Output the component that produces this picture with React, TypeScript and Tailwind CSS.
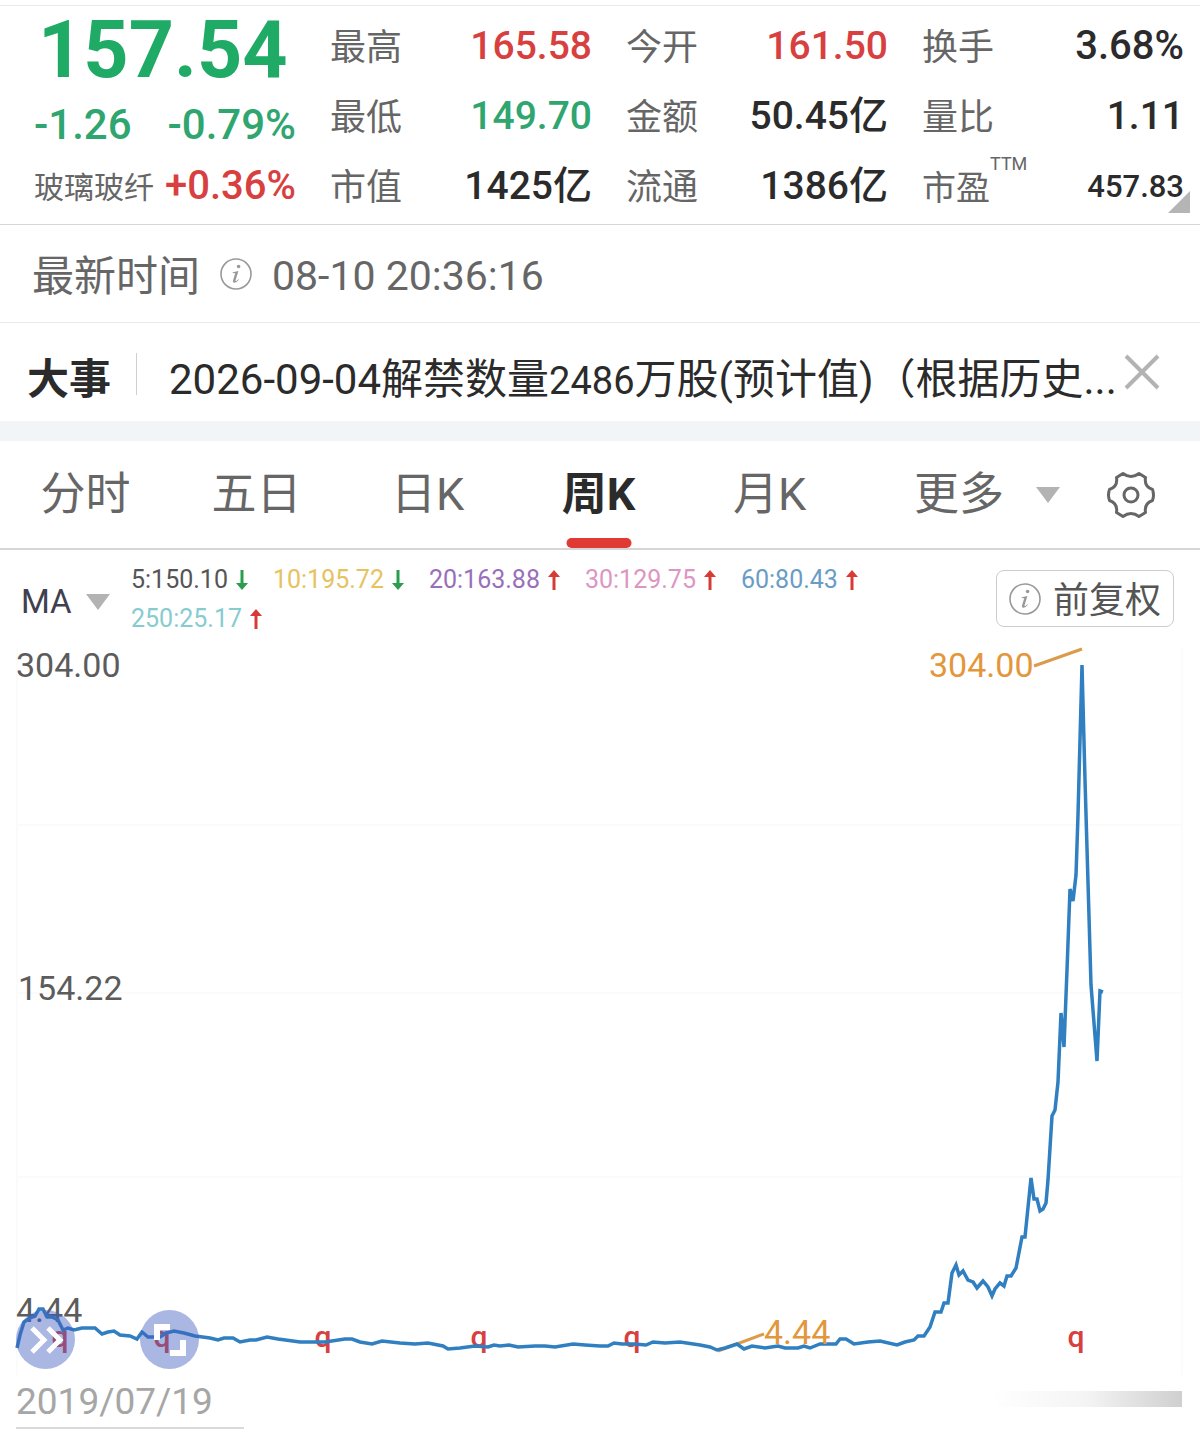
import React from 'react';

type Quote = { label: string; value: string; color: string };

const quotes: Quote[][] = [
  [
    { label: '最高', value: '165.58', color: 'text-[#d8403f]' },
    { label: '最低', value: '149.70', color: 'text-[#2fa56f]' },
    { label: '市值', value: '1425亿', color: 'text-[#2b2b2b]' },
  ],
  [
    { label: '今开', value: '161.50', color: 'text-[#d8403f]' },
    { label: '金额', value: '50.45亿', color: 'text-[#2b2b2b]' },
    { label: '流通', value: '1386亿', color: 'text-[#2b2b2b]' },
  ],
];

const averages = [
  { text: '5:150.10', color: 'text-[#555555]', up: false },
  { text: '10:195.72', color: 'text-[#e6c260]', up: false },
  { text: '20:163.88', color: 'text-[#9a6fba]', up: true },
  { text: '30:129.75', color: 'text-[#dd96c2]', up: true },
  { text: '60:80.43', color: 'text-[#6a9cc6]', up: true },
  { text: '250:25.17', color: 'text-[#86cccf]', up: true },
];

const pricePoints = `
17,1348 20,1335 24,1322 30,1318 35,1316 39,1309 43,1309 47,1317 52,1317 58,1320 63,1330 68,1328 74,1330 82,1328
95,1328 102,1334 108,1332 114,1331 120,1335 130,1336 137,1339 142,1332 148,1337 160,1337 166,1333 174,1331
184,1333 195,1336 210,1338 218,1340 224,1338 233,1338 240,1342 250,1340 256,1340 267,1337 278,1339 300,1342
325,1342 345,1339 352,1339 360,1342 372,1344 382,1341 400,1343 415,1344 428,1343 443,1346 448,1349 460,1348
475,1346 488,1347 494,1345 500,1346 509,1345 518,1347 535,1346 545,1346 555,1347 573,1344 585,1345 600,1346
608,1346 614,1343 622,1344 634,1344 646,1345 653,1342 665,1343 680,1342 700,1345 710,1347 717,1350 725,1348
737,1344 744,1349 752,1346 765,1348 778,1346 785,1348 798,1348 804,1346 810,1348 820,1344 836,1344 840,1339
846,1339 854,1344 868,1342 880,1341 897,1345 905,1342 914,1340 918,1336 924,1336 930,1327 935,1312 941,1312
944,1303 948,1303 952,1273 956,1265 959,1275 963,1271 968,1280 973,1282 977,1288 983,1281 988,1287 992,1296
995,1289 1000,1283 1004,1286 1007,1276 1011,1276 1016,1268 1022,1237 1025,1237 1031,1178 1034,1199 1037,1199
1040,1211 1043,1209 1046,1203 1048,1180 1052,1116 1055,1110 1058,1082 1061,1013 1064,1047 1067,970 1070,889
1073,901 1076,875 1078,815 1082,665 1085,780 1091,985 1097,1061 1100,991 1103,992`;

const InfoIcon: React.FC = () => (
  <svg width="32" height="32" viewBox="0 0 32 32" fill="none" className="shrink-0 text-[#999999]">
    <circle cx="16" cy="16" r="15" stroke="currentColor" strokeWidth="1.6" />
    <circle cx="18.600" cy="8.500" r="1.800" fill="currentColor" />
    <path d="M12.800 14.200L18.400 13L15.600 22.200C15.300 23.600 16.300 23.400 18.300 21.200L18.800 21.700C16.600 24.800 12.200 26.200 13 22.600L15.200 15.200L12.600 15Z" fill="currentColor" />
  </svg>
);

const Caret: React.FC = () => (
  <svg width="24" height="16" viewBox="0 0 24 16" className="shrink-0">
    <path d="M0 0h24L12 16z" fill="#b3b3b3" />
  </svg>
);

const Arrow: React.FC<{ up: boolean }> = ({ up }) => (
  <svg width="12" height="20" viewBox="0 0 12 20" className="shrink-0">
    {up ? (
      <path d="M6 0l6 7H7.500v13h-3V7H0z" fill="#d63b36" />
    ) : (
      <path d="M6 20l6-7H7.500V0h-3v13H0z" fill="#2a9d4e" />
    )}
  </svg>
);

const QuoteHeader: React.FC = () => (
  <header className="mt-[5px] grid grid-cols-4 gap-[34px] border-y border-t-[#ececec] border-b-[#d6d6d6] pt-[5px] pr-4 pb-[3px] pl-[34px]">
    <div>
      <div className="flex h-[78px] items-center pl-1 text-[79px] leading-none font-bold text-[#1fab66]">157.54</div>
      <div className="flex h-[72px] items-center justify-between text-[42px] font-medium text-[#2fa56f]">
        <span>-1.26</span>
        <span>-0.79%</span>
      </div>
      <div className="flex h-[50px] items-center justify-between whitespace-nowrap">
        <span className="pt-1 text-[30px] text-[#666666]">玻璃玻纤</span>
        <span className="text-[40px] font-medium text-[#d8403f]">+0.36%</span>
      </div>
    </div>

    {quotes.map((column, i) => (
      <dl key={i}>
        {column.map((q) => (
          <div key={q.label} className="flex h-[70px] items-center justify-between whitespace-nowrap">
            <dt className="pt-1 text-[36px] text-[#666666]">{q.label}</dt>
            <dd className={`text-[39px] font-medium ${q.color}`}>{q.value}</dd>
          </div>
        ))}
      </dl>
    ))}

    <dl className="relative whitespace-nowrap text-[#2b2b2b]">
      <div className="flex h-[70px] items-center justify-between">
        <dt className="pt-1 text-[36px] text-[#666666]">换手</dt>
        <dd className="text-[40px] font-medium">3.68%</dd>
      </div>
      <div className="flex h-[70px] items-center justify-between">
        <dt className="pt-1 text-[36px] text-[#666666]">量比</dt>
        <dd className="text-[39px] font-medium">1.11</dd>
      </div>
      <div className="flex h-[70px] items-center justify-between">
        <dt className="relative pt-1 text-[34px] text-[#666666]">
          市盈
          <sup className="absolute -top-3 left-full text-[18px] leading-none">TTM</sup>
        </dt>
        <dd className="text-[31px] font-medium">457.83</dd>
      </div>
      <svg width="22" height="22" viewBox="0 0 22 22" className="absolute -right-1.5 bottom-2">
        <path d="M22 0v22H0z" fill="#b5b5b5" />
      </svg>
    </dl>
  </header>
);

const Notice: React.FC = () => (
  <section className="flex h-[98px] items-center pt-3 pr-10 pl-[27px] text-[#2b2b2b]">
    <h2 className="shrink-0 pt-1 text-[42px] font-bold">大事</h2>
    <div className="mb-2 ml-[25px] h-[42px] w-px shrink-0 bg-[#d0d0d0]" />
    <p className="ml-8 min-w-0 flex-1 pt-1 text-[42px] whitespace-nowrap">
      2026-09-04解禁数量<span className="text-[38px]">2486</span>
      万股(预计值)（根据历史...
    </p>
    <button type="button" aria-label="关闭" className="mb-3 shrink-0">
      <svg width="36" height="36" viewBox="0 0 36 36" fill="none" stroke="#b3b3b3" strokeWidth="4">
        <path d="M2 2l32 32M34 2L2 34" />
      </svg>
    </button>
  </section>
);

const Tabs: React.FC = () => (
  <nav className="flex h-[109px] border-b-2 border-[#d6d6d6] text-[45px] text-[#666666]">
    {['分时', '五日', '日K', '周K', '月K'].map((name) => (
      <button
        key={name}
        type="button"
        className={`relative flex-1 whitespace-nowrap ${name === '周K' ? 'font-bold text-[#2b2b2b]' : ''}`}
      >
        {name}
        {name === '周K' && (
          <span className="absolute bottom-0 left-1/2 h-2.5 w-[65px] -translate-x-1/2 rounded-full bg-[#e03a34]" />
        )}
      </button>
    ))}
    <div className="flex w-[345px] shrink-0 items-center justify-between pr-[45px] pl-[59px]">
      <button type="button" className="flex items-center gap-8 whitespace-nowrap">
        更多
        <Caret />
      </button>
      <button type="button" aria-label="设置">
        <svg width="48" height="48" viewBox="0 0 48 48" fill="none" stroke="#666666" strokeWidth="3" strokeLinejoin="round">
          <path d="M16 2.500Q24 8.500 32 2.500L38.500 6.500Q37 15.500 45.500 18.500Q47.500 24 45.500 29.500Q37 32.500 38.500 41.500L32 45.500Q24 39.500 16 45.500L9.500 41.500Q11 32.500 2.500 29.500Q.5 24 2.500 18.500Q11 15.500 9.500 6.500Z" />
          <circle cx="24" cy="24" r="7" />
        </svg>
      </button>
    </div>
  </nav>
);

const Averages: React.FC = () => (
  <div className="flex h-[90px] items-start pt-[10px] pr-[26px] pl-[21px]">
    <button type="button" className="mt-5 flex w-[110px] shrink-0 items-center gap-3.5 text-[33px] leading-[44px] text-[#40404f]">
      MA
      <Caret />
    </button>
    <ul className="flex flex-1 flex-wrap gap-x-[25px] text-[25px] leading-[39px]">
      {averages.map((a) => (
        <li key={a.text} className={`flex items-center gap-2 ${a.color}`}>
          {a.text}
          <Arrow up={a.up} />
        </li>
      ))}
    </ul>
    <button
      type="button"
      className="mt-2.5 flex h-[57px] shrink-0 items-center gap-3 rounded-lg border border-[#cccccc] px-3 text-[36px] whitespace-nowrap text-[#555555]"
    >
      <InfoIcon />
      <span className="pt-1">前复权</span>
    </button>
  </div>
);

const Chart: React.FC = () => (
  <section className="relative">
    <svg viewBox="0 640 1200 735" className="block w-full" fontSize="34">
      <g stroke="#fafafa" strokeWidth="1.500" fill="none">
        <path d="M17 648V1375M1182 648V1375M17 825H1182M17 993H1182M17 1177H1182" />
      </g>
      <g fill="#5c5c5c">
        <text x="16" y="677">304.00</text>
        <text x="18" y="1000">154.22</text>
        <text x="16" y="1322">4.44</text>
      </g>
      <g fill="#d8403f" fontSize="30" fontWeight="500" textAnchor="middle">
        {[60, 162, 323, 479, 632, 1076].map((x) => (
          <text key={x} x={x} y="1347">q</text>
        ))}
      </g>
      <path d="M718 1351L764 1334M1034 666L1082 649" stroke="#dc9a4c" strokeWidth="3" />
      <polyline points={pricePoints} fill="none" stroke="#2f7fc1" strokeWidth="3.500" />
      <g fill="#e3973c">
        <text x="929" y="677">304.00</text>
        <text x="764" y="1344">4.44</text>
      </g>
    </svg>

    {/* chart controls float over the left end of the line */}
    <div className="absolute bottom-1.5 left-4 flex gap-[65px]">
      <button type="button" aria-label="快进" className="flex size-[59px] items-center justify-center rounded-full bg-[#4560c0]/45">
        <svg width="36" height="32" viewBox="0 0 36 32" fill="none" stroke="#ffffff" strokeWidth="5">
          <path d="M4 4l12 12L4 28M20 4l12 12-12 12" />
        </svg>
      </button>
      <button type="button" aria-label="全屏" className="flex size-[59px] items-center justify-center rounded-full bg-[#4560c0]/45">
        <svg width="34" height="34" viewBox="0 0 34 34" fill="none" stroke="#ffffff" strokeWidth="6">
          <path d="M4 17V4H17M17 30H30V17" />
        </svg>
      </button>
    </div>
  </section>
);

const App: React.FC = () => (
  <main className="flow-root w-full bg-white font-['Roboto','Noto_Sans_CJK_SC',sans-serif] leading-none">
    <QuoteHeader />
    <section className="flex h-[98px] items-center border-b border-[#ececec] pl-8 text-[42px] text-[#666666]">
      <span className="mr-5 pt-1.5">最新时间</span>
      <InfoIcon />
      <time className="ml-5 pt-1.5 text-[41px]">08-10 20:36:16</time>
    </section>
    <Notice />
    <div className="h-5 bg-[#f1f5f8]" />
    <Tabs />
    <Averages />
    <Chart />
    <footer className="flex h-[54px] items-start justify-between pr-[18px] pl-4">
      <div className="h-full w-[228px] border-b-2 border-[#d9d9d9] pt-2 text-[37px] text-[#a6a6a6]">2019/07/19</div>
      <div className="mt-4 h-4 w-[190px] bg-linear-to-r from-white via-[#f4f4f4] to-[#cfcfcf]" />
    </footer>
  </main>
);

export default App;
